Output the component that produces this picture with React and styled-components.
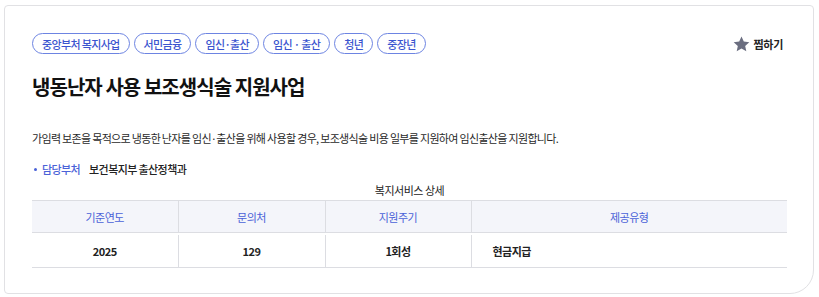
import React from 'react';
import styled, { createGlobalStyle } from 'styled-components';

const GlobalStyle = createGlobalStyle`
body {
  margin: 0;
  background: #ffffff;
  font-family: "Noto Sans CJK KR", "Noto Sans", sans-serif;
  color: #222;
}
`;

const Card = styled.section`
box-sizing: border-box;
width: 810px;
height: 289px;
margin: 5px 0 0 4px;
padding: 27px 26px 0 27px;
border: solid 1px #e1e1e4;
border-radius: 4px 4px 24px 4px;
`;

const TopRow = styled.div`
display: flex;
justify-content: space-between;
align-items: center;
`;

const Tags = styled.div`
display: flex;
gap: 4px;
`;

const Tag = styled.span`
box-sizing: border-box;
height: 21px;
padding: 0 9px;
display: flex;
align-items: center;
border: solid 1px #6d84e2;
border-radius: 11px;
color: #3b55cf;
font-size: 11px;
font-weight: 500;
letter-spacing: -0.65px;
`;

const Bookmark = styled.button`
display: flex;
align-items: center;
gap: 4px;
margin-right: 4px;
padding: 0;
border: none;
background: none;
font-family: inherit;
font-size: 11px;
font-weight: 700;
letter-spacing: -0.3px;
color: #222;
`;

const Title = styled.h1`
margin: 19px 0 0;
font-size: 20px;
line-height: 28px;
font-weight: 700;
letter-spacing: -0.95px;
color: #111;
`;

const Summary = styled.p`
margin: 29px 0 0;
font-size: 11px;
line-height: 16px;
color: #2a2a2a;
letter-spacing: -0.68px;
`;

const InfoRow = styled.div`
display: flex;
align-items: center;
margin-top: 15px;
font-size: 11px;
line-height: 16px;
letter-spacing: -0.6px;
font-weight: 500;
`;

const InfoLabel = styled.span`
position: relative;
padding-left: 10px;
margin-right: 9px;
color: #4a62d8;
&::before {
  content: "";
  position: absolute;
  left: 2px;
  top: 7px;
  width: 3px;
  height: 3px;
  border-radius: 50%;
  background: #4a62d8;
}
`;

const InfoValue = styled.span`
color: #222;
`;

const Table = styled.table`
width: 755px;
margin-top: 6px;
border-collapse: collapse;
font-size: 11px;
letter-spacing: -0.5px;
table-layout: fixed;
`;

const Caption = styled.caption`
font-size: 11px;
line-height: 14px;
padding-bottom: 3px;
color: #222;
`;

const HeadCell = styled.th`
height: 32px;
padding: 0;
background: #f4f5fa;
border-top: solid 1px #dcdde2;
border-bottom: solid 2px #fff;
box-shadow: inset 0 -1px 0 #dcdde2;
border-left: solid 1px #dcdde2;
color: #4a62d8;
font-weight: 400;
&:first-child { border-left: none; }
`;

const BodyCell = styled.td`
height: 32px;
padding: 0 ${p => (p.left ? '21px' : '0')};
text-align: ${p => (p.left ? 'left' : 'center')};
border-bottom: solid 1px #dcdde2;
border-left: solid 1px #dcdde2;
font-weight: 700;
color: #222;
&:first-child { border-left: none; }
`;

const tags = ['중앙부처 복지사업', '서민금융', '임신·출산', '임신 · 출산', '청년', '중장년'];

export default function App() {
  return (
    <>
      <GlobalStyle />
      <Card>
        <TopRow>
          <Tags>
            {tags.map(t => <Tag key={t}>{t}</Tag>)}
          </Tags>
          <Bookmark>
            <svg width="17" height="16" viewBox="0 0 24 23">
              <path d="M12 0.8l3.3 7.2 7.9 0.9-5.9 5.4 1.6 7.8L12 18.1l-6.9 4 1.6-7.8L0.8 8.9l7.9-0.9z" fill="#6b6e80" />
            </svg>
            찜하기
          </Bookmark>
        </TopRow>
        <Title>냉동난자 사용 보조생식술 지원사업</Title>
        <Summary>가임력 보존을 목적으로 냉동한 난자를 임신·출산을 위해 사용할 경우, 보조생식술 비용 일부를 지원하여 임신출산을 지원합니다.</Summary>
        <InfoRow>
          <InfoLabel>담당부처</InfoLabel>
          <InfoValue>보건복지부 출산정책과</InfoValue>
        </InfoRow>
        <Table>
          <Caption>복지서비스 상세</Caption>
          <colgroup>
            <col style={{ width: 146 }} />
            <col style={{ width: 147 }} />
            <col style={{ width: 146 }} />
            <col />
          </colgroup>
          <thead>
            <tr>
              <HeadCell>기준연도</HeadCell>
              <HeadCell>문의처</HeadCell>
              <HeadCell>지원주기</HeadCell>
              <HeadCell>제공유형</HeadCell>
            </tr>
          </thead>
          <tbody>
            <tr>
              <BodyCell>2025</BodyCell>
              <BodyCell>129</BodyCell>
              <BodyCell>1회성</BodyCell>
              <BodyCell left>현금지급</BodyCell>
            </tr>
          </tbody>
        </Table>
      </Card>
    </>
  );
}
